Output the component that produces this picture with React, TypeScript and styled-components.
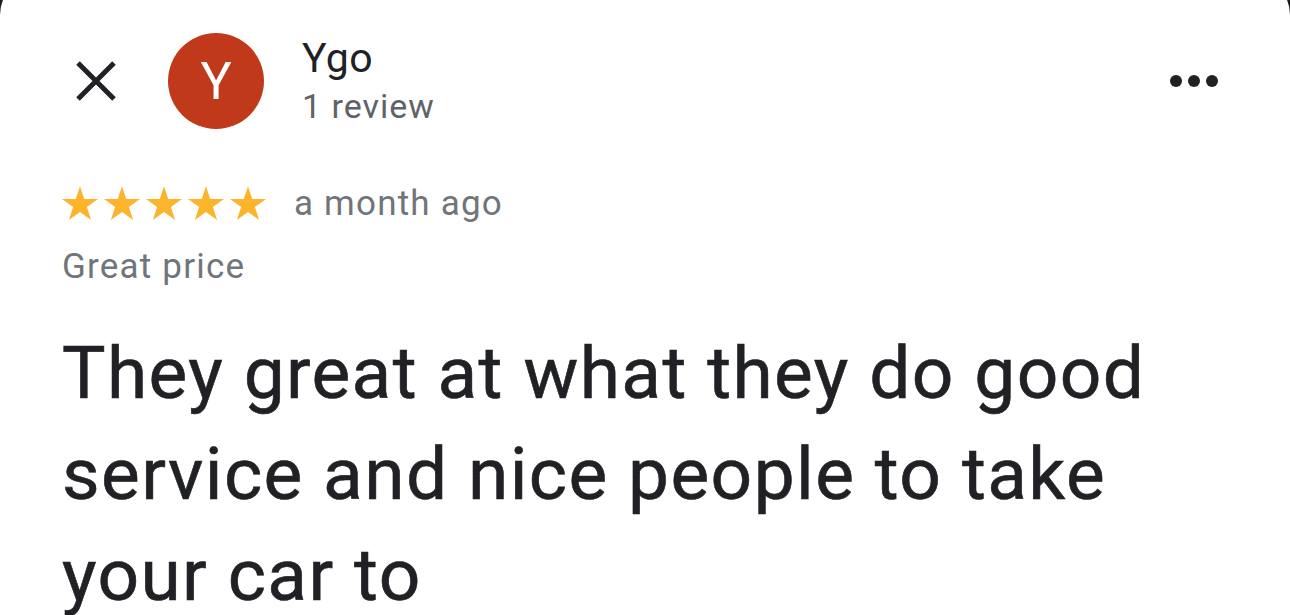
import React from 'react';
import styled, { createGlobalStyle } from 'styled-components';

const GlobalStyle = createGlobalStyle`
  html, body {
    margin: 0;
    padding: 0;
    background: #1c1c1e;
    font-family: Roboto, "Liberation Sans", Arial, sans-serif;
    overflow: hidden;
  }
`;

const Card = styled.div`
  background: #ffffff;
  margin-top: -25px;
  padding-top: 25px;
  border-radius: 40px;
  height: 700px;
  overflow: hidden;
`;

const Header = styled.div`
  display: flex;
  align-items: center;
  padding: 33px 72px 0 75px;
`;

const CloseButton = styled.button`
  display: flex;
  align-items: center;
  justify-content: center;
  width: 42px;
  height: 42px;
  padding: 0;
  border: 0;
  background: none;
  color: #202124;
  cursor: pointer;
`;

const Avatar = styled.div`
  width: 96px;
  height: 96px;
  margin-left: 51px;
  border-radius: 50%;
  background: #c0391b;
  color: #ffffff;
  display: flex;
  align-items: center;
  justify-content: center;
  font-size: 52px;
  font-weight: 400;
`;

const Author = styled.div`
  display: flex;
  flex-direction: column;
  margin-left: 38px;
`;

const Name = styled.div`
  font-size: 41px;
  color: #202124;
  line-height: 46px;
  letter-spacing: 0.5px;
`;

const Count = styled.div`
  margin-top: 3px;
  font-size: 34px;
  color: #5f6368;
  line-height: 44px;
  letter-spacing: 1px;
`;

const MoreButton = styled.button`
  margin-left: auto;
  display: flex;
  gap: 6px;
  padding: 0;
  border: 0;
  background: none;
  cursor: pointer;
`;

const Dot = styled.span`
  width: 12px;
  height: 12px;
  border-radius: 50%;
  background: #202124;
`;

const Body = styled.div`
  padding: 0 120px 0 62px;
`;

const MetaRow = styled.div`
  display: flex;
  align-items: center;
  margin-top: 54px;
  gap: 28px;
`;

const Stars = styled.div`
  display: flex;
  gap: 6px;
`;

const Meta = styled.span`
  font-size: 35px;
  color: #70757a;
  letter-spacing: 1.2px;
`;

const Tag = styled.div`
  margin-top: 22px;
  font-size: 35px;
  color: #70757a;
  letter-spacing: 1.2px;
`;

const ReviewText = styled.p`
  margin: 36px 0 0;
  font-size: 73px;
  line-height: 101px;
  color: #202124;
  font-weight: 400;
  letter-spacing: 1.4px;
  -webkit-text-stroke: 0.6px #202124;
`;

const Star = () => (
  <svg width="36" height="35" viewBox="0 0 24 23">
    <path
      fill="#fbb42c"
      d="M12 0l2.82 8.42H24l-7.4 5.36 2.83 8.67L12 17.1l-7.43 5.35 2.83-8.67L0 8.42h9.18z"
    />
  </svg>
);

const App = () => (
  <>
    <GlobalStyle />
    <Card>
      <Header>
        <CloseButton aria-label="Close">
          <svg width="42" height="42" viewBox="0 0 42 42">
            <path d="M3 3L39 39M39 3L3 39" stroke="#202124" strokeWidth="5" />
          </svg>
        </CloseButton>
        <Avatar>Y</Avatar>
        <Author>
          <Name>Ygo</Name>
          <Count>1 review</Count>
        </Author>
        <MoreButton aria-label="More">
          <Dot />
          <Dot />
          <Dot />
        </MoreButton>
      </Header>
      <Body>
        <MetaRow>
          <Stars>
            {[0, 1, 2, 3, 4].map((i) => (
              <Star key={i} />
            ))}
          </Stars>
          <Meta>a month ago</Meta>
        </MetaRow>
        <Tag>Great price</Tag>
        <ReviewText>
          They great at what they do good service and nice people to take your car to
        </ReviewText>
      </Body>
    </Card>
  </>
);

export default App;
